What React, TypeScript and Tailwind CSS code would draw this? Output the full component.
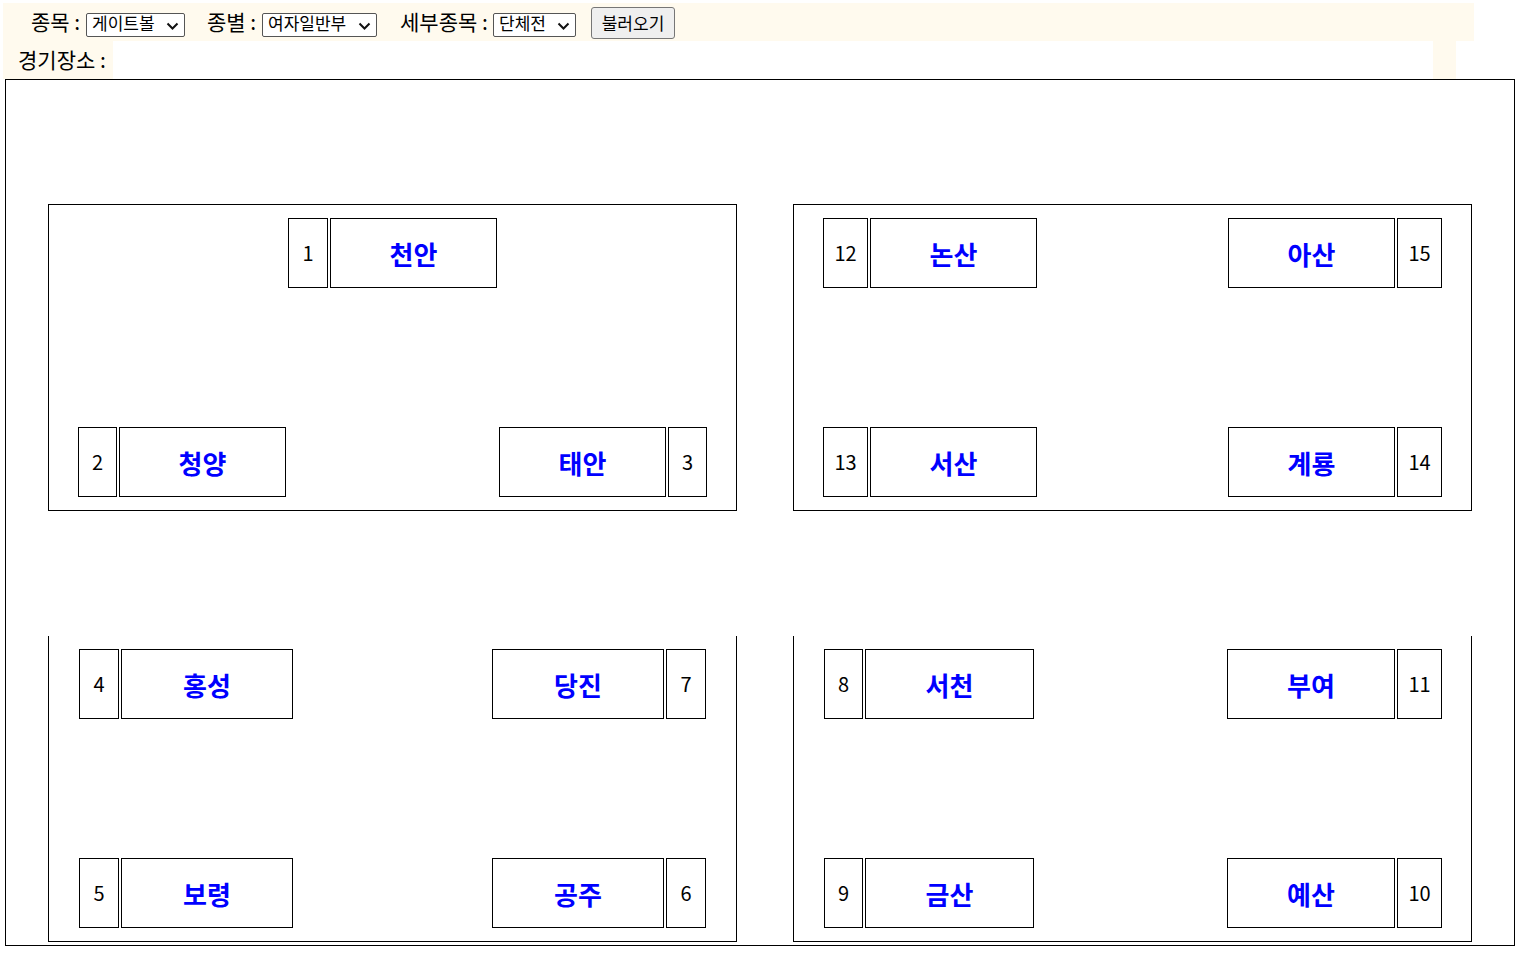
import React from 'react';

type Seat = { no: number; name: string; numW: number; nameW: number };

const font = { fontFamily: '"Noto Sans CJK KR", "Noto Sans", sans-serif' };

function Pair({ seat, numRight }: { seat: Seat; numRight?: boolean }) {
  const num = (
    <div
      className="h-[70px] border border-black flex items-center justify-center text-[20px] text-black"
      style={{ width: seat.numW }}
    >
      {seat.no}
    </div>
  );
  const name = (
    <div
      className="h-[70px] border border-black flex items-center justify-center text-[26px] font-bold text-[#0000ff]"
      style={{ width: seat.nameW }}
    >
      {seat.name}
    </div>
  );
  return (
    <div className="flex gap-[2px]">
      {numRight ? (
        <>
          {name}
          {num}
        </>
      ) : (
        <>
          {num}
          {name}
        </>
      )}
    </div>
  );
}

/**
 * Panel: one group of four (or three) seats
 */
function Panel({
  top,
  bl,
  br,
  tr,
  noTopBorder,
  className,
}: {
  top: Seat;
  bl: Seat;
  br: Seat;
  tr?: Seat;
  noTopBorder?: boolean;
  className: string;
}) {
  return (
    <div
      className={`${className} ${
        noTopBorder ? 'h-[306px] border-x border-b' : 'h-[307px] border'
      } border-black flex flex-col justify-between py-[13px]`}
    >
      {tr ? (
        <div className="flex justify-between">
          <Pair seat={top} />
          <Pair seat={tr} numRight />
        </div>
      ) : (
        <div className="flex justify-center">
          <Pair seat={top} />
        </div>
      )}
      <div className="flex justify-between">
        <Pair seat={bl} />
        <Pair seat={br} numRight />
      </div>
    </div>
  );
}

function Select({ value, className }: { value: string; className: string }) {
  return (
    <div className={`relative h-[24px] mt-[5px] ${className}`}>
      <select className="appearance-none block w-full h-full border border-[#555] rounded-[2px] text-[17px] leading-[18px] pl-[5px] pt-0 pb-[3px] bg-white">
        <option>{value}</option>
      </select>
      {/* chevron */}
      <svg
        className="absolute right-[6px] top-[9px] pointer-events-none"
        width="13"
        height="8"
        viewBox="0 0 13 8"
        fill="none"
      >
        <path d="M1.5 1.5 L6.5 6.5 L11.5 1.5" stroke="#111" strokeWidth="2" />
      </svg>
    </div>
  );
}

export default function App() {
  return (
    <div className="w-[1529px] h-[957px] bg-white text-black" style={font}>
      {/* header form */}
      <div className="pl-[3px] pt-[3px] w-[1474px]">
        <div className="h-[38px] bg-[#fffaee] flex items-center pl-[28px] text-[21px]">
          <span className="w-[55px]">종목 :</span>
          <Select value="게이트볼" className="w-[99px]" />
          <span className="ml-[22px] w-[55px]">종별 :</span>
          <Select value="여자일반부" className="w-[115px]" />
          <span className="ml-[23px] w-[93px]">세부종목 :</span>
          <Select value="단체전" className="w-[83px]" />
          <button className="ml-[15px] h-[32px] w-[84px] mt-[2px] border border-[#767676] rounded-[3px] bg-[#efefef] text-[17px]">
            불러오기
          </button>
        </div>
        <div className="h-[38px] flex">
          <div className="w-[110px] bg-[#fffaee] flex items-center pl-[15px] text-[21px]">경기장소 :</div>
          <div className="flex-1" />
          <div className="w-[23px] bg-[#fffaee] mr-[18px]" />
        </div>
      </div>

      {/* seating board */}
      <div className="ml-[5px] w-[1510px] h-[867px] border border-black pt-[124px] pl-[42px]">
        <div className="flex gap-[56px]">
          <Panel
            className="w-[689px] px-[29px]"
            top={{ no: 1, name: '천안', numW: 40, nameW: 167 }}
            bl={{ no: 2, name: '청양', numW: 39, nameW: 167 }}
            br={{ no: 3, name: '태안', numW: 39, nameW: 167 }}
          />
          <Panel
            className="w-[679px] px-[29px]"
            top={{ no: 12, name: '논산', numW: 45, nameW: 167 }}
            tr={{ no: 15, name: '아산', numW: 45, nameW: 167 }}
            bl={{ no: 13, name: '서산', numW: 45, nameW: 167 }}
            br={{ no: 14, name: '계룡', numW: 45, nameW: 167 }}
          />
        </div>
        <div className="flex gap-[56px] mt-[125px]">
          <Panel
            className="w-[689px] px-[30px]"
            noTopBorder
            top={{ no: 4, name: '홍성', numW: 40, nameW: 172 }}
            tr={{ no: 7, name: '당진', numW: 40, nameW: 172 }}
            bl={{ no: 5, name: '보령', numW: 40, nameW: 172 }}
            br={{ no: 6, name: '공주', numW: 40, nameW: 172 }}
          />
          <Panel
            className="w-[679px] pl-[30px] pr-[29px]"
            noTopBorder
            top={{ no: 8, name: '서천', numW: 39, nameW: 169 }}
            tr={{ no: 11, name: '부여', numW: 45, nameW: 168 }}
            bl={{ no: 9, name: '금산', numW: 39, nameW: 169 }}
            br={{ no: 10, name: '예산', numW: 45, nameW: 168 }}
          />
        </div>
      </div>
    </div>
  );
}
